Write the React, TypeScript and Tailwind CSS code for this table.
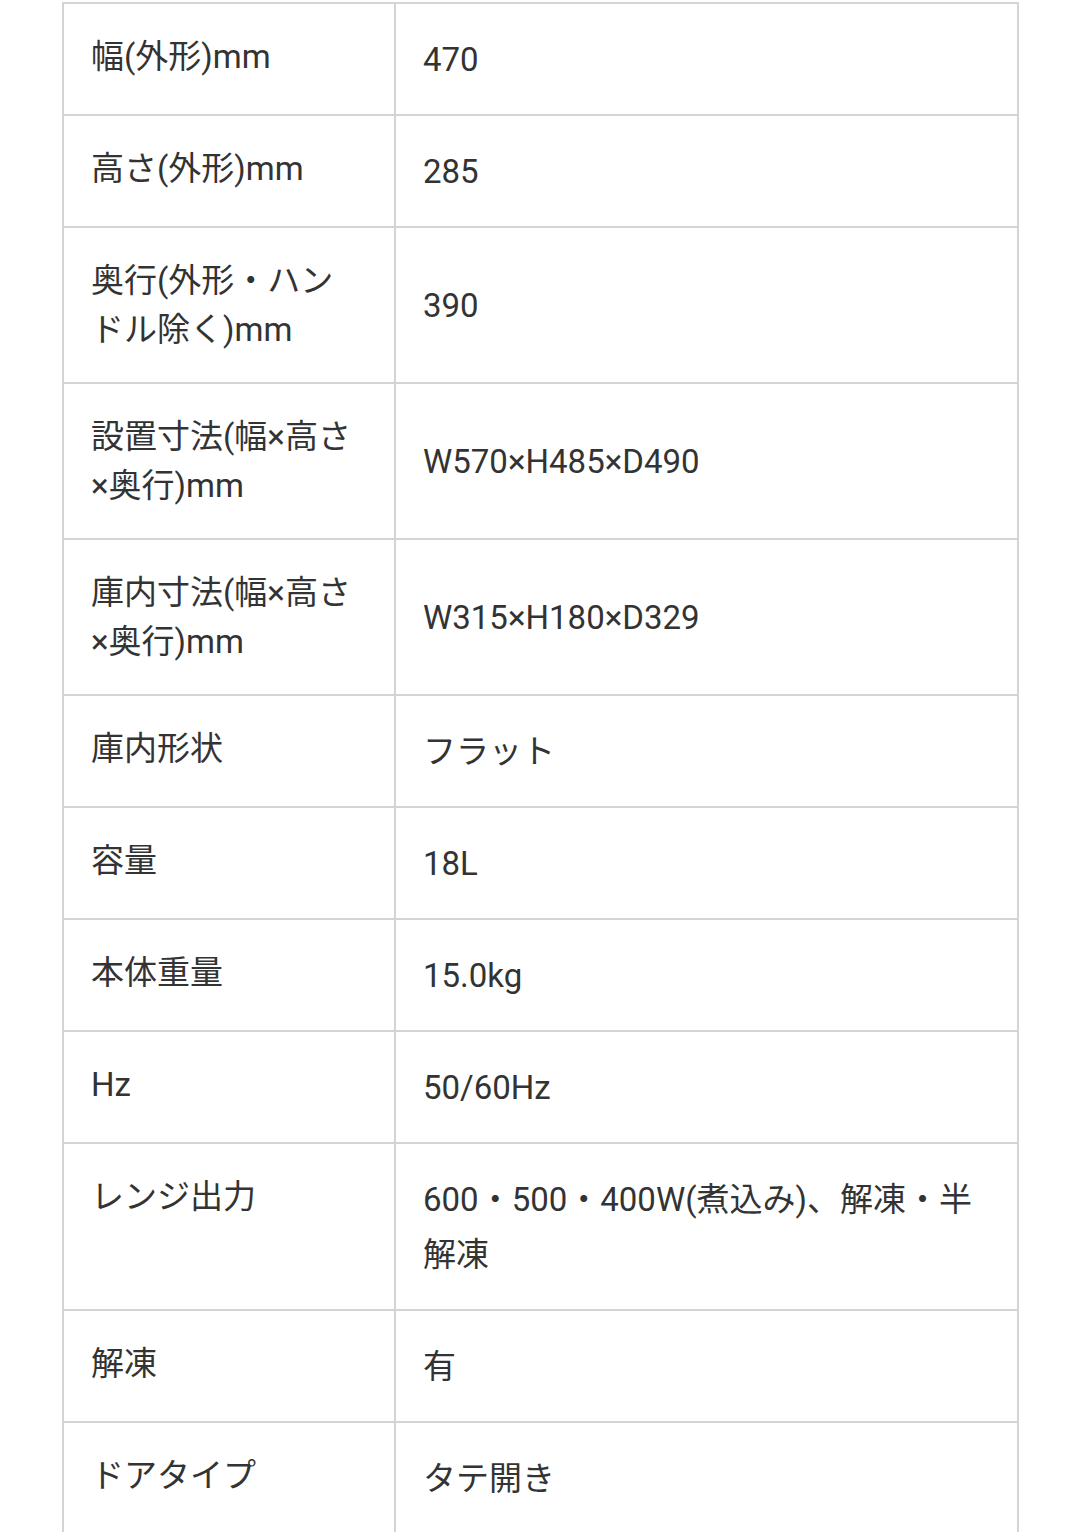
const rows: [string, string][] = [
  ['幅(外形)mm', '470'],
  ['高さ(外形)mm', '285'],
  ['奥行(外形・ハンドル除く)mm', '390'],
  ['設置寸法(幅×高さ×奥行)mm', 'W570×H485×D490'],
  ['庫内寸法(幅×高さ×奥行)mm', 'W315×H180×D329'],
  ['庫内形状', 'フラット'],
  ['容量', '18L'],
  ['本体重量', '15.0kg'],
  ['Hz', '50/60Hz'],
  ['レンジ出力', '600・500・400W(煮込み)、解凍・半解凍'],
  ['解凍', '有'],
  ['ドアタイプ', 'タテ開き'],
]

export default function App() {
  return (
    <div className="min-h-[1532px] bg-white pt-[2px] pl-[62px] pr-[61px] font-['Roboto','Noto_Sans_CJK_JP',sans-serif] text-[33px] text-[#333333]">
      <table className="w-full border-collapse table-fixed">
        <colgroup>
          <col className="w-[332px]" />
          <col />
        </colgroup>
        <tbody>
          {rows.map(([label, value]) => (
            <tr key={label}>
              <th className="border-2 border-[#d4d4d4] pl-[27px] pr-[33px] pt-[28px] pb-[28px] text-left align-top font-normal leading-[49px]">
                {label}
              </th>
              <td className="border-2 border-[#d4d4d4] px-[27px] pt-[28px] pb-[27px] align-middle leading-[55px]">
                {value}
              </td>
            </tr>
          ))}
        </tbody>
      </table>
    </div>
  )
}
